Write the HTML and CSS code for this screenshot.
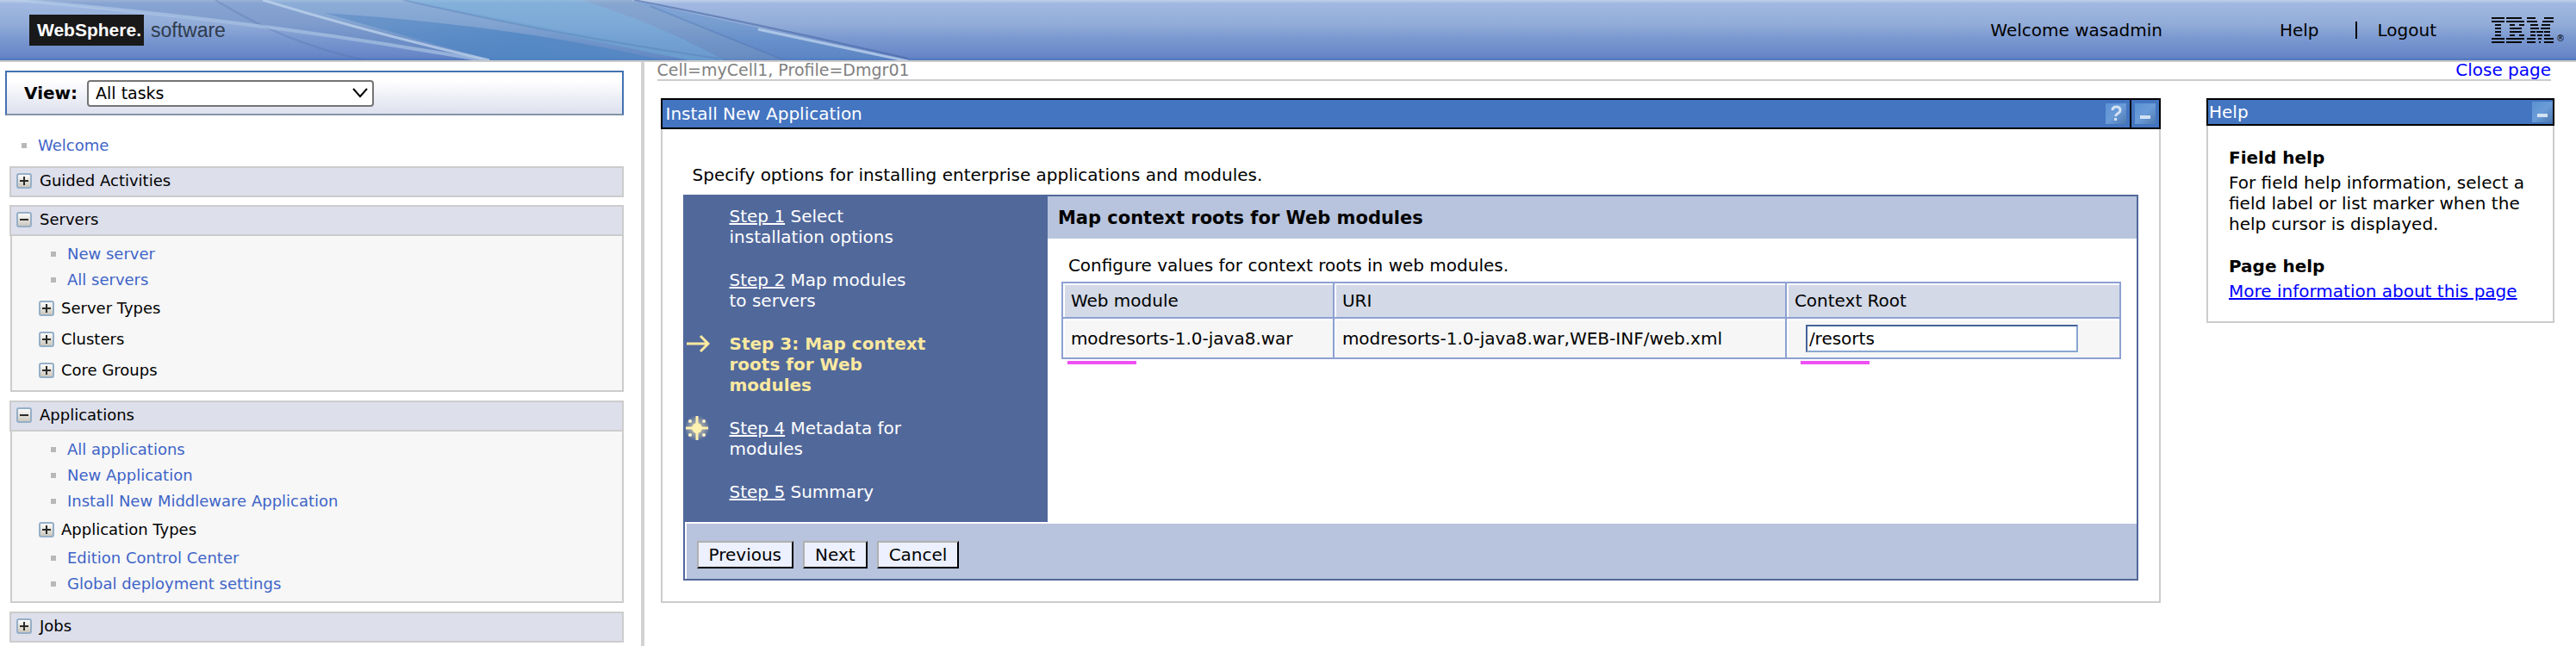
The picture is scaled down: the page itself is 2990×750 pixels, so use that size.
FILE: index.html
```html
<!DOCTYPE html>
<html lang="en">
<head>
<meta charset="utf-8">
<title>WebSphere administrative console</title>
<link rel="stylesheet" href="styles.css">
</head>
<body>
<svg class="defs" aria-hidden="true">
  <defs>
    <linearGradient id="tile" x1="0" y1="0" x2="0" y2="1"><stop offset="0" stop-color="#ffffff"/><stop offset="1" stop-color="#c9c4b8"/></linearGradient>
    <linearGradient id="chip" x1="0" y1="0" x2="1" y2="1"><stop offset="0" stop-color="#5a92d2"/><stop offset=".5" stop-color="#6b9cd8"/><stop offset="1" stop-color="#4c78ae"/></linearGradient>
    <radialGradient id="glow"><stop offset=".3" stop-color="#fff3b8" stop-opacity=".55"/><stop offset="1" stop-color="#fff3b8" stop-opacity="0"/></radialGradient>
    <symbol id="plus" viewBox="0 0 18 18"><rect x="1" y="1" width="16" height="16" rx="2" fill="url(#tile)" stroke="#95afc8" stroke-width="2"/><path d="M4 9h10M9 4v10" stroke="#2b2b2b" stroke-width="2"/></symbol>
    <symbol id="minus" viewBox="0 0 18 18"><rect x="1" y="1" width="16" height="16" rx="2" fill="url(#tile)" stroke="#95afc8" stroke-width="2"/><path d="M4 9h10" stroke="#2b2b2b" stroke-width="2"/></symbol>
    <symbol id="min-btn" viewBox="0 0 24 24"><rect width="24" height="24" fill="url(#chip)"/><rect x="6" y="14" width="12" height="4" fill="#d3e2f4"/></symbol>
  </defs>
</svg>

<header class="banner">
  <svg class="swoosh" aria-hidden="true">
    <defs>
      <linearGradient id="fade" x1="0" x2="1"><stop offset="0" stop-color="#4a7fc0" stop-opacity=".4"/><stop offset=".6" stop-color="#4a84c2" stop-opacity=".7"/><stop offset="1" stop-color="#4a84c2" stop-opacity=".55"/></linearGradient>
    </defs>
    <path d="M30 0Q300 28 560 70H571L305 0Z" fill="#6285bc" fill-opacity=".4"/>
    <path d="M305 0H468L835 70H571Z" fill="#6496c4" fill-opacity=".35"/>
    <path d="M376 15Q600 30 770 70H571Z" fill="url(#fade)"/>
    <path d="M468 0H675Q770 30 841 70H800Q650 40 468 0Z" fill="#6fa8d6" fill-opacity=".6"/>
    <path d="M675 0H732L910 70H841Q770 30 675 0Z" fill="#6c93c0" fill-opacity=".5"/>
    <path d="M732 0L1054 70H910Z" fill="#4f86c4" fill-opacity=".4"/>
    <path d="M468 0Q640 40 835 68M755 7L910 70M250 0Q330 50 425 70" fill="none" stroke="#5072aa" stroke-opacity=".3" stroke-width="2"/>
    <path d="M736 0Q890 30 1054 68" fill="none" stroke="#4a68a4" stroke-opacity=".6" stroke-width="2"/>
    <path d="M20 0Q300 24 560 70" fill="none" stroke="#b4cdea" stroke-opacity=".6" stroke-width="4"/>
    <path d="M305 0Q430 38 568 70M880 34L1054 71" fill="none" stroke="#c0d6ee" stroke-opacity=".75" stroke-width="3"/>
  </svg>
  <div class="brand"><span class="brand-name">WebSphere.</span><span class="brand-kind">software</span></div>
  <div class="session">
    <span class="who">Welcome wasadmin</span>
    <a class="session-link" href="#help">Help</a>
    <span class="bar"></span>
    <a class="session-link" href="#logout">Logout</a>
  </div>
  <div class="ibm" role="img" aria-label="IBM">
    <svg width="72" height="30" viewBox="0 0 72 30" aria-hidden="true">
      <path d="M0 1h15M17 1h18M41 1h10M61 1h11M0 5h15M17 5h21M41 5h12M59 5h13M4 9h7M21 9h6M32 9h6M45 9h9M58 9h10M4 13h7M21 13h14M45 13h10M57 13h11M4 17h7M21 17h14M45 17h6M52 17h8M61 17h7M4 21h7M21 21h6M32 21h6M45 21h6M53 21h6M61 21h7M0 25h15M17 25h21M41 25h10M54 25h4M61 25h11M0 29h15M17 29h18M41 29h10M55 29h2M61 29h11" stroke="#0a0a0a" stroke-width="2" fill="none"/>
    </svg>
    <span class="reg">®</span>
  </div>
</header>

<div class="shell">
  <nav class="tasks">
    <div class="view">
      <label for="view">View:</label>
      <span class="pick">
        <select id="view"><option>All tasks</option></select>
        <svg class="chevron" width="18" height="12" viewBox="0 0 18 12" aria-hidden="true"><path d="M1 1l8 9 8-9" fill="none" stroke="#000" stroke-width="2"/></svg>
      </span>
    </div>
    <a class="leaf top" href="#welcome">Welcome</a>
    <section class="group">
      <button class="group-head"><svg class="toggle"><use href="#plus"/></svg>Guided Activities</button>
    </section>
    <section class="group">
      <button class="group-head"><svg class="toggle"><use href="#minus"/></svg>Servers</button>
      <div class="group-body">
        <a class="leaf" href="#s1">New server</a>
        <a class="leaf" href="#s2">All servers</a>
        <button class="branch"><svg class="toggle"><use href="#plus"/></svg>Server Types</button>
        <button class="branch"><svg class="toggle"><use href="#plus"/></svg>Clusters</button>
        <button class="branch"><svg class="toggle"><use href="#plus"/></svg>Core Groups</button>
      </div>
    </section>
    <section class="group">
      <button class="group-head"><svg class="toggle"><use href="#minus"/></svg>Applications</button>
      <div class="group-body">
        <a class="leaf" href="#a1">All applications</a>
        <a class="leaf" href="#a2">New Application</a>
        <a class="leaf" href="#a3">Install New Middleware Application</a>
        <button class="branch"><svg class="toggle"><use href="#plus"/></svg>Application Types</button>
        <a class="leaf" href="#a4">Edition Control Center</a>
        <a class="leaf" href="#a5">Global deployment settings</a>
      </div>
    </section>
    <section class="group">
      <button class="group-head"><svg class="toggle"><use href="#plus"/></svg>Jobs</button>
    </section>
  </nav>

  <main class="content">
    <div class="crumbs"><span class="cell">Cell=myCell1, Profile=Dmgr01</span><a class="close" href="#close">Close page</a></div>
    <div class="columns">
      <section class="portlet">
        <div class="portlet-head">
          <h1 class="portlet-title">Install New Application</h1>
          <button class="head-btn" aria-label="Help"><svg width="24" height="24" viewBox="0 0 24 24"><rect width="24" height="24" fill="url(#chip)"/><path d="M8 8q0-4 4.500-4t4.500 4q0 2-2.500 3.500T11.500 15" fill="none" stroke="#d3e2f4" stroke-width="3"/><rect x="10" y="17" width="3" height="3" fill="#d3e2f4"/></svg></button>
          <button class="head-btn split" aria-label="Minimize"><svg width="24" height="24"><use href="#min-btn"/></svg></button>
        </div>
        <div class="portlet-body">
          <p class="lead">Specify options for installing enterprise applications and modules.</p>
          <div class="wizard">
            <ol class="steps">
              <li class="step"><span class="mark"></span><span class="step-text"><a href="#1">Step 1</a> Select installation options</span></li>
              <li class="step"><span class="mark"></span><span class="step-text"><a href="#2">Step 2</a> Map modules to servers</span></li>
              <li class="step current"><span class="mark"><svg width="28" height="24" viewBox="0 0 28 24"><path d="M1 12h24M17 3l9 9-9 9" fill="none" stroke="#fbe9a0" stroke-width="3"/></svg></span><span class="step-text">Step 3: Map context roots for Web modules</span></li>
              <li class="step"><span class="mark"><svg width="28" height="28" viewBox="0 0 28 28"><circle cx="13" cy="14" r="15" fill="url(#glow)"/><circle cx="13" cy="14" r="6" fill="#fff1b0"/><path d="M13 0v28M0 14h26" stroke="#fff1b0" stroke-width="3"/><g fill="#fff6cc"><circle cx="5" cy="6" r="2"/><circle cx="21" cy="6" r="2"/><circle cx="5" cy="22" r="2"/><circle cx="21" cy="22" r="2"/></g></svg></span><span class="step-text"><a href="#4">Step 4</a> Metadata for modules</span></li>
              <li class="step"><span class="mark"></span><span class="step-text"><a href="#5">Step 5</a> Summary</span></li>
            </ol>
            <div class="pane">
              <h2 class="pane-title">Map context roots for Web modules</h2>
              <p class="pane-text">Configure values for context roots in web modules.</p>
              <table class="modules">
                <colgroup><col class="c-module"><col class="c-uri"><col></colgroup>
                <thead><tr><th>Web module</th><th>URI</th><th><label for="root">Context Root</label></th></tr></thead>
                <tbody><tr>
                  <td class="noted">modresorts-1.0-java8.war</td>
                  <td>modresorts-1.0-java8.war,WEB-INF/web.xml</td>
                  <td class="noted field"><input id="root" type="text" value="/resorts"></td>
                </tr></tbody>
              </table>
            </div>
            <div class="actions">
              <button class="btn">Previous</button>
              <button class="btn">Next</button>
              <button class="btn">Cancel</button>
            </div>
          </div>
        </div>
      </section>

      <aside class="portlet help">
        <div class="portlet-head">
          <h2 class="portlet-title">Help</h2>
          <button class="head-btn" aria-label="Minimize help"><svg width="24" height="24"><use href="#min-btn"/></svg></button>
        </div>
        <div class="help-body">
          <h3>Field help</h3>
          <p>For field help information, select a field label or list marker when the help cursor is displayed.</p>
          <h3>Page help</h3>
          <p><a href="#more">More information about this page</a></p>
        </div>
      </aside>
    </div>
  </main>
</div>
</body>
</html>
```
FILE: styles.css
```css
* { box-sizing: border-box; }
body {
  margin: 0;
  min-height: 100vh;
  display: flex;
  flex-direction: column;
  background: #fff;
  color: #000;
  font: 20px/24px Verdana, "DejaVu Sans", sans-serif;
}
h1, h2, h3, p, ol { margin: 0; padding: 0; font-size: inherit; }
button, input, select { font: inherit; color: inherit; }
button { margin: 0; }
.defs { position: absolute; width: 0; height: 0; }

.banner {
  position: relative;
  display: flex;
  align-items: center;
  height: 72px;
  padding: 0 13px 0 34px;
  border-bottom: 2px solid #ccc;
  background: linear-gradient(#c0d0e8 0, #a1b9e2 4px, #92acd8 28px, #7a98d0 45px, #6685c6 66px, #4f76bf 70px);
}
.swoosh { position: absolute; left: 0; top: 0; width: 1060px; height: 70px; }
.brand { position: relative; display: flex; align-items: center; gap: 8px; font: 23px/36px "Liberation Sans Narrow", "Liberation Sans", sans-serif; }
.brand-name { padding: 0 3px 0 9px; background: #191919; color: #fff; font-size: 21px; font-weight: bold; }
.brand-kind { color: #2f3b4c; }
.session { display: flex; align-items: center; margin-left: auto; }
.who { margin-right: 136px; }
.session-link { color: #000; text-decoration: none; }
.bar { width: 2px; height: 20px; margin: 0 24px 0 42px; background: #000; }
.ibm { display: flex; align-items: flex-end; gap: 3px; margin-left: 64px; }
.reg { font-size: 10px; line-height: 10px; }

.shell { flex: 1; display: flex; }
.tasks { flex: 0 0 25%; padding: 10px 20px 4px 6px; border-right: 4px solid #d2d2d2; font-size: 18px; }
.view {
  display: flex;
  align-items: center;
  gap: 11px;
  height: 52px;
  padding-left: 20px;
  border: 2px solid #4471b0;
  border-bottom-color: #8494a6;
  background: linear-gradient(#fff 20%, #dde0ee);
  font-size: 20px;
}
.view label { font-weight: bold; }
.pick { position: relative; display: flex; width: 333px; }
.pick select { appearance: none; width: 100%; height: 31px; padding: 0 8px; border: 2px solid #757575; border-radius: 4px; background: #fff; font-size: 19px; }
.chevron { position: absolute; right: 7px; top: 9px; pointer-events: none; }
.leaf { display: flex; align-items: center; gap: 13px; height: 30px; padding-left: 45px; color: #3e64c8; text-decoration: none; }
.leaf::before { content: ""; width: 6px; height: 6px; background: #b8b8b8; }
.leaf.top { margin: 20px 0 9px; padding-left: 19px; }
.group { margin: 0 0 9px 5px; }
.group-head { display: flex; align-items: center; gap: 9px; width: 100%; height: 36px; padding: 0 6px 2px; border: 2px solid #ccc; background: #dddfeb; text-align: left; }
.toggle { flex: none; width: 18px; height: 18px; }
.group-body { margin: 0 0 10px 1px; padding: 6px 0 5px; border: 2px solid #ccc; border-top: 0; background: #f7f7f7; }
.branch { display: flex; align-items: center; gap: 8px; height: 36px; padding: 0 0 0 31px; border: 0; background: none; }

.content { flex: 1; min-width: 0; padding: 0 25px 0 15px; }
.crumbs { display: flex; justify-content: space-between; height: 22px; margin-right: 4px; border-bottom: 2px solid #ccc; line-height: 18px; color: #808080; }
.cell { font-size: 19px; }
.close { color: #00f; text-decoration: none; }
.columns { display: flex; align-items: flex-start; gap: 53px; padding: 20px 0 0 4px; }
.portlet { flex: 1; min-width: 0; }
.portlet-head { display: flex; align-items: stretch; height: 36px; border: 2px solid #000; background: #4475c1; color: #fff; }
.portlet-title { flex: 1; padding-left: 4px; font-weight: normal; line-height: 32px; }
.head-btn { display: flex; align-items: center; padding: 0 4px; border: 0; background: none; }
.head-btn.split { border-left: 2px solid #000; }
.portlet-body { padding: 41px 24px 24px; border: 2px solid #ccc; border-top: 0; }
.lead { padding: 0 0 11px 11px; }

.wizard { display: grid; grid-template-columns: 25% 1fr; border: 2px solid #51689b; }
.steps { padding: 11px 0 23px 1px; background: #51689b; color: #fff; list-style: none; display: flex; flex-direction: column; gap: 26px; }
.step { display: flex; }
.step a { color: inherit; }
.step-text { width: 228px; }
.mark { flex: 0 0 51px; height: 24px; display: flex; align-items: center; }
.current { color: #fbe9a0; font-weight: bold; }
.current .step-text { width: 240px; }
.pane-title { height: 49px; padding-left: 12px; background: #b8c4dd; font-size: 21px; line-height: 50px; }
.pane-text { padding: 19px 0 7px 24px; }
.modules { width: calc(100% - 34px); margin-left: 16px; border-collapse: collapse; border: 2px solid #8ca0d2; table-layout: fixed; }
.c-module { width: 315px; }
.c-uri { width: 525px; }
.modules th, .modules td { position: relative; border: 2px solid #8ca0d2; padding: 0 9px; text-align: left; font-weight: normal; box-shadow: inset 2px 2px #fff; }
.modules th { height: 41px; background: #d3d9e7; }
.modules td { height: 47px; background: #f6f6f6; }
.modules td.field { padding-left: 22px; }
.field input { display: block; width: 316px; height: 32px; padding: 0 2px; border: 2px solid #8aa6d0; border-top-color: #446399; border-left-color: #446399; background: #fff; }
.noted::after { content: ""; position: absolute; left: 5px; bottom: -8px; width: 80px; height: 4px; background: #ee50f4; }
.noted.field::after { left: 16px; }
.actions { grid-column: 1 / -1; display: flex; gap: 11px; padding: 20px 12px 12px; border: solid #fff; border-width: 2px 0 0 2px; background: #b8c4dd; }
.btn { height: 32px; padding: 0 12px; border: 2px solid #000; border-color: #b0b0b0 #000 #000 #b0b0b0; background: #ecf0ff; line-height: 24px; }

.help { flex: 0 0 404px; }
.help .portlet-head { height: 32px; }
.help .portlet-title { padding-left: 1px; line-height: 28px; }
.help .head-btn { padding: 0; }
.help-body { padding: 25px 24px 23px; border: 2px solid #ccc; border-top: 0; }
.help-body h3 { padding-bottom: 5px; }
.help-body p + h3 { padding-top: 25px; }
.help-body a { color: #00f; }
```
